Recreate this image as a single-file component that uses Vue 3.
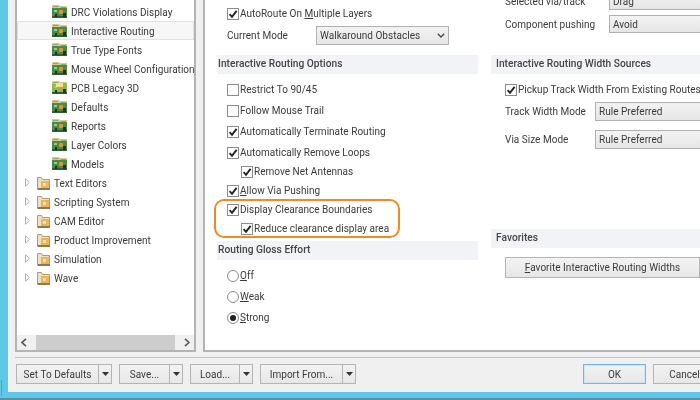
<script setup>
const pcb = ['DRC Violations Display','Interactive Routing','True Type Fonts','Mouse Wheel Configuration','PCB Legacy 3D','Defaults','Reports','Layer Colors','Models']
const folders = ['Text Editors','Scripting System','CAM Editor','Product Improvement','Simulation','Wave']
const opts = [
  { key:'', post:'Restrict To 90/45', on:false, cls:'' },
  { key:'', post:'Follow Mouse Trail', on:false, cls:'' },
  { key:'', post:'Automatically Terminate Routing', on:true, cls:'' },
  { key:'', post:'Automatically Remove Loops', on:true, cls:'' },
  { key:'', post:'Remove Net Antennas', on:true, cls:'sub short pull' },
  { key:'A', post:'llow Via Pushing', on:true, cls:'short' },
  { key:'', post:'Display Clearance Boundaries', on:true, cls:'short' },
  { key:'', post:'Reduce clearance display area', on:true, cls:'sub short' },
]
const radios = [
  { key:'O', post:'ff', on:false },
  { key:'W', post:'eak', on:false },
  { key:'S', post:'trong', on:true },
]
const footer = [
  { label:'Set To Defaults', cls:'b-defaults' },
  { label:'Save...', cls:'b-save' },
  { label:'Load...', cls:'b-load' },
  { label:'Import From...', cls:'b-import' },
]
</script>

<template>
  <div class="shot">
    <div class="window">
      <div class="main">
        <aside class="tree">
          <div class="rows">
            <div v-for="(n, i) in pcb" :key="n" class="row child" :class="{ sel: i === 1 }">
              <svg class="pcb" width="15" height="15" viewBox="0 0 15 15">
                <path d="M0 1h7l1 1h7v3H0z" fill="#d6c893"/>
                <path d="M1 2h5v1H1zM9 3h5v1H9z" fill="#8ea867"/>
                <rect x="0" y="4" width="15" height="10" :fill="i === 4 ? '#8dbb4a' : '#4a8a44'"/>
                <rect x="0" y="12" width="15" height="2" fill="#2f6030"/>
                <rect x="7" y="6" width="4" height="4" rx="1" fill="#e39237"/>
                <rect x="2" y="6" width="3" height="2" fill="#9cc785"/>
                <rect x="3" y="10" width="2" height="3" fill="#26302a"/>
                <rect x="11" y="9" width="3" height="4" fill="#26302a"/>
                <rect v-if="i === 4" x="4" y="3" width="7" height="4" fill="#f1e38f"/>
              </svg>
              <span>{{ n }}</span>
            </div>
            <div v-for="n in folders" :key="n" class="row parent">
              <svg class="arrow" width="5" height="9" viewBox="0 0 5 9"><path d="M.5.8 4.4 4.5.5 8.2z" fill="#fff" stroke="#b0b0b0"/></svg>
              <svg class="folder" width="13" height="14" viewBox="0 0 13 14">
                <path d="M.5 1.5h4l1 2h7v10h-12z" fill="#ede2c4" stroke="#a89c7c"/>
                <rect x="4" y="5" width="8" height="8" fill="#efb25c"/>
                <rect x="6" y="7" width="3" height="3" fill="#f9e3b0"/>
                <rect x="1" y="12" width="12" height="2" fill="#8b7a4c"/>
              </svg>
              <span>{{ n }}</span>
            </div>
          </div>
          <div class="hscroll">
            <svg width="6" height="9" viewBox="0 0 6 9"><path d="M5 .8 1 4.5 5 8.2" fill="none" stroke="#555" stroke-width="1.6"/></svg>
            <div class="thumb"></div>
            <svg width="6" height="9" viewBox="0 0 6 9"><path d="M1 .8 5 4.5 1 8.2" fill="none" stroke="#555" stroke-width="1.6"/></svg>
          </div>
        </aside>

        <section class="panel">
          <div class="col left">
            <label class="opt auto">
              <span class="check"><svg width="10" height="10" viewBox="0 0 10 10"><path d="M1.6 5.2 4 7.8 8.6 1.8" fill="none" stroke="#222" stroke-width="1.9"/></svg></span>
              <span>AutoRoute On <u>M</u>ultiple Layers</span>
            </label>
            <div class="mode">
              <span class="mode-label">Current Mode</span>
              <div class="select walk">
                <span>Walkaround Obstacles</span>
                <svg width="8" height="5" viewBox="0 0 8 5"><path d="M.8.8 4 4 7.2.8" fill="none" stroke="#444" stroke-width="1.3"/></svg>
              </div>
            </div>
            <h3 class="head h-routing">Interactive Routing Options</h3>
            <div class="options">
              <label v-for="o in opts" :key="o.post" class="opt" :class="o.cls">
                <span class="check">
                  <svg v-if="o.on" width="10" height="10" viewBox="0 0 10 10"><path d="M1.6 5.2 4 7.8 8.6 1.8" fill="none" stroke="#222" stroke-width="1.9"/></svg>
                </span>
                <span><u v-if="o.key">{{ o.key }}</u>{{ o.post }}</span>
              </label>
            </div>
            <h3 class="head h-gloss">Routing Gloss Effort</h3>
            <div class="radios">
              <label v-for="r in radios" :key="r.key" class="opt">
                <span class="radio"><i v-if="r.on"></i></span>
                <span><u>{{ r.key }}</u>{{ r.post }}</span>
              </label>
            </div>
            <div class="callout"></div>
          </div>

          <div class="col right">
            <div class="pair">
              <span>Selected via/track</span>
              <div class="select wide">Drag</div>
            </div>
            <div class="pair second">
              <span>Component pushing</span>
              <div class="select wide">Avoid</div>
            </div>
            <h3 class="head h-width">Interactive Routing Width Sources</h3>
            <label class="opt pickup">
              <span class="check"><svg width="10" height="10" viewBox="0 0 10 10"><path d="M1.6 5.2 4 7.8 8.6 1.8" fill="none" stroke="#222" stroke-width="1.9"/></svg></span>
              <span>Pickup Track Width From Existing Routes</span>
            </label>
            <div class="pair track">
              <span>Track Width Mode</span>
              <div class="select narrow">Rule Preferred</div>
            </div>
            <div class="pair via">
              <span>Via Size Mode</span>
              <div class="select narrow">Rule Preferred</div>
            </div>
            <h3 class="head h-fav">Favorites</h3>
            <button class="btn fav"><span><u>F</u>avorite Interactive Routing Widths</span></button>
          </div>
        </section>
      </div>

      <div class="footer">
        <div class="split-group">
          <button v-for="b in footer" :key="b.label" class="btn split" :class="b.cls">
            <span class="split-label">{{ b.label }}</span>
            <span class="split-arrow"><svg width="7" height="4" viewBox="0 0 7 4"><path d="M0 0h7L3.5 4z" fill="#333"/></svg></span>
          </button>
        </div>
        <div class="actions">
          <button class="btn ok">OK</button>
          <button class="btn cancel">Cancel</button>
        </div>
      </div>
    </div>
    <div class="edge"></div>
  </div>
</template>

<style>
html, body { margin: 0; background: #fff; }
</style>

<style scoped>
.shot {
  position: relative;
  width: 700px;
  height: 400px;
  overflow: hidden;
  background: #5a8fa3;
  font-family: Roboto, "Noto Sans", sans-serif;
  font-size: 10px;
  letter-spacing: 0.02px;
  color: #3a3a3a;
  filter: blur(0.4px);
}
.edge { position: absolute; left: 1px; top: 380px; width: 1px; height: 16px; background: #b08a5a; }
.window {
  box-sizing: border-box;
  width: 700px;
  height: 398px;
  background: #f0f0f0;
  border-left: 8px solid #5fc8e6;
  border-bottom: 6px solid #5fc8e6;
  overflow: hidden;
}
.main {
  display: flex;
  gap: 7px;
  padding-left: 7px;
  height: 352px;
  box-sizing: border-box;
}
.tree {
  box-sizing: border-box;
  width: 181px;
  flex: none;
  height: 352px;
  background: #fff;
  border: 2px solid #b4b4b4;
  border-top: 0;
  display: flex;
  flex-direction: column;
}
.rows { flex: 1; padding-top: 2px; }
.row { height: 19px; display: flex; align-items: center; white-space: nowrap; overflow: hidden; }
.row span { position: relative; top: 1px; }
.child { padding-left: 35px; }
.child .pcb { margin-right: 4px; flex: none; }
.parent { padding-left: 8px; }
.parent .arrow { margin-right: 7px; flex: none; }
.parent .folder { margin-right: 4px; flex: none; }
.sel { background: #f7f7f7; box-shadow: inset 0 0 0 1px #e2e2e2; }
.hscroll {
  height: 15px;
  background: #f0f0f0;
  display: flex;
  align-items: center;
  padding: 0 4px;
  gap: 9px;
}
.thumb { width: 140px; height: 15px; background: #cdcdcd; }
.panel {
  flex: 1;
  min-width: 0;
  box-sizing: border-box;
  height: 352px;
  background: #fff;
  border-left: 2px solid #b4b4b4;
  border-bottom: 2px solid #b4b4b4;
  display: flex;
  overflow: hidden;
  padding-left: 12px;
}
.col { flex: none; }
.left { width: 260px; position: relative; padding-top: 3px; }
.right { width: 240px; margin-left: 14px; margin-top: -8px; }
.opt { display: flex; align-items: center; height: 21px; padding-left: 10px; white-space: nowrap; gap: 1px; }
.short { height: 19px; }
.sub { padding-left: 24px; height: 19px; }
.pull { margin-top: -1px; }
.check {
  box-sizing: border-box;
  width: 12px;
  height: 12px;
  flex: none;
  background: #fff;
  border: 1px solid #8c8c8c;
  display: flex;
  align-items: center;
  justify-content: center;
}
.radio {
  box-sizing: border-box;
  width: 12px;
  height: 12px;
  flex: none;
  border-radius: 50%;
  background: #fff;
  border: 1px solid #8c8c8c;
  display: flex;
  align-items: center;
  justify-content: center;
}
.radio i { width: 6px; height: 6px; border-radius: 50%; background: #222; }
.mode { display: flex; align-items: center; height: 19px; margin-top: 2px; padding-left: 10px; }
.mode-label { width: 89px; }
.select {
  box-sizing: border-box;
  height: 19px;
  border: 1px solid #b0b0b0;
  background: linear-gradient(#f3f3f3, #e6e6e6);
  display: flex;
  align-items: center;
  justify-content: space-between;
  padding: 0 3px;
}
.walk { width: 133px; }
.head {
  margin: 0;
  height: 19px;
  line-height: 18px;
  padding-left: 1px;
  font-size: 10.2px;
  font-weight: 500;
  color: #444;
  background: #f1f3f6;
}
.h-routing { margin-top: 10px; width: 260px; }
.options { padding-top: 5px; }
.h-gloss { margin-top: 3px; width: 260px; }
.radios { padding-top: 5px; }
.callout {
  position: absolute;
  left: -3px;
  top: 199px;
  width: 186px;
  height: 39px;
  box-sizing: border-box;
  border: 2px solid #f08a24;
  border-radius: 10px;
  pointer-events: none;
}
.pair { display: flex; align-items: center; padding-left: 14px; white-space: nowrap; }
.pair span { flex: none; }
.pair .wide { margin-left: auto; width: 122px; height: 18px; flex: none; justify-content: flex-start; }
.pair .narrow { margin-left: auto; width: 136px; flex: none; justify-content: flex-start; }
.second { margin-top: 5px; }
.h-width { margin-top: 22px; padding-left: 5px; }
.pickup { padding-left: 14px; margin-top: 5px; }
.track { margin-top: 2px; }
.via { margin-top: 9px; }
.h-fav { margin-top: 80px; padding-left: 5px; }
.btn {
  box-sizing: border-box;
  font: inherit;
  letter-spacing: inherit;
  color: #3a3a3a;
  background: linear-gradient(#f3f3f3, #e7e7e7);
  border: 1px solid #b4b4b4;
  padding: 0;
}
.fav { display: block; width: 195px; height: 21px; margin: 9px 0 0 14px; }
.footer {
  height: 40px;
  box-sizing: border-box;
  margin: 5px 0 0 7px;
  border-top: 1px solid #c4c4c4;
  padding: 6px 0 0 1px;
  display: flex;
  justify-content: space-between;
}
.split-group { display: flex; gap: 7px; }
.split { display: flex; height: 20px; align-items: stretch; }
.split-label { flex: 1; display: flex; align-items: center; justify-content: center; border-right: 1px solid #b4b4b4; }
.split-arrow { width: 12px; display: flex; align-items: center; justify-content: center; flex: none; }
.b-defaults { width: 96px; }
.b-save { width: 64px; }
.b-load { width: 63px; }
.b-import { width: 96px; }
.actions { display: flex; gap: 7px; margin-right: -16px; }
.ok { width: 63px; height: 20px; border-color: #6fb7e8; box-shadow: inset 0 0 0 1px #cfe6f7; }
.cancel { width: 63px; height: 20px; }
</style>
